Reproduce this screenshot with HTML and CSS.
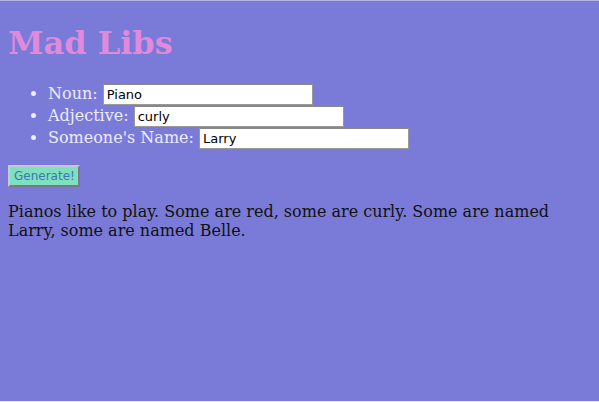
FILE: index.html
```html
<!DOCTYPE html>
<html>
<head>
<meta charset="utf-8">
<title>Mad Libs</title>
<link rel="stylesheet" href="styles.css">
</head>
<body class="page">
<h1 class="title">Mad Libs</h1>
<ul class="fields">
  <li class="field">Noun: <input class="word" type="text" value="Piano"></li>
  <li class="field">Adjective: <input class="word" type="text" value="curly"></li>
  <li class="field">Someone's Name: <input class="word" type="text" value="Larry"></li>
</ul>
<div class="actions"><button class="generate" type="button">Generate!</button></div>
<p class="story">Pianos like to play. Some are red, some are curly. Some are named Larry, some are named Belle.</p>
</body>
</html>
```
FILE: styles.css
```css
html {
  background: #7a7bd8;
  border-top: 1px solid #b4b4ea;
  min-height: 400px;
  border-bottom: 1px solid #e8e8f6;
}
.page {
  margin: 8px;
  margin-top: 7px;
  font-family: "DejaVu Serif", serif;
  font-size: 16px;
  color: #000;
}
.title {
  font-size: 32px;
  font-weight: bold;
  color: #df8adb;
  margin: 16px 0 21px;
}
.fields {
  padding-left: 40px;
  margin: 16px 0;
  color: #ececfa;
}
.field {
  line-height: 21px;
}
.word {
  font-family: "DejaVu Sans", sans-serif;
  font-size: 13px;
  width: 210px;
  height: 21px;
  box-sizing: border-box;
  padding: 1px 3px;
  border: 1px solid #999;
  border-top-color: #8a8a8a;
  background: #fff;
  color: #000;
  vertical-align: middle;
}
.actions {
  margin: 0;
}
.generate {
  font-family: "DejaVu Sans", sans-serif;
  font-size: 12px;
  background: #7fe0c0;
  color: #3a78b0;
  border: 2px outset #c8c8d8;
  padding: 2px 4px;
  height: 22px;
  width: 72px;
}
.story {
  margin: 15px 0 16px;
  color: #111;
  line-height: 19px;
}
```
